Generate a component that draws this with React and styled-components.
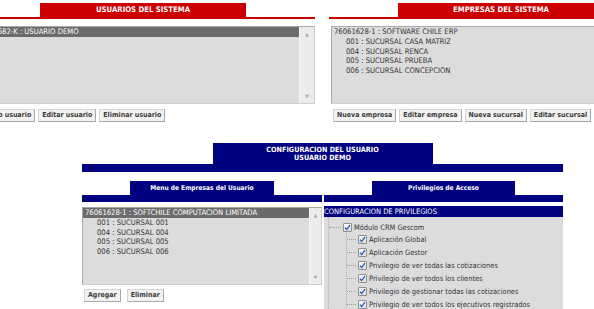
import React from "react";
import styled, { createGlobalStyle } from "styled-components";

const FONT = `"DejaVu Sans Condensed", "Liberation Sans", sans-serif`;

const GlobalStyle = createGlobalStyle`
  html, body { margin: 0; padding: 0; background: #fff; overflow: hidden; }
  body { font-family: ${FONT}; }
`;

const Page = styled.div`
  width: 703px;
  margin-left: -29px;
  padding-top: 3px;
`;

const TopRow = styled.div`
  display: flex;
  gap: 14px;
`;

const Panel = styled.section`
  width: 344px;
  flex: none;
`;

const RedTab = styled.div`
  width: 206px;
  height: 14px;
  margin: 0 auto;
  background: #cc0000;
  color: #fff;
  font-weight: bold;
  font-size: 7.7px;
  line-height: 14px;
  text-align: center;
`;

const RedRule = styled.div`
  height: 2px;
  background: #cc0000;
`;

const ListBox = styled.div`
  display: flex;
  box-sizing: border-box;
  height: 78px;
  margin: ${(p) => p.$m || "0"};
  background: #dcdcdc;
  border: 1px solid #a9a9a9;
  border-right-color: #cfcfcf;
  border-bottom-color: #cfcfcf;
`;

const ListItems = styled.div`
  flex: 1;
  min-width: 0;
  overflow: hidden;
`;

const Item = styled.div`
  height: 9.75px;
  line-height: 9.75px;
  font-size: 7.6px;
  white-space: nowrap;
  color: ${(p) => (p.$sel ? "#fff" : "#333")};
  background: ${(p) => (p.$sel ? "#6b6b6b" : "transparent")};
  padding-left: ${(p) => (p.$indent ? 14 : 2)}px;
`;

const ScrollBar = styled.div`
  width: ${(p) => p.$w || 14}px;
  flex: none;
  background: #ececec;
  border-left: 1px solid #f6f6f6;
  display: flex;
  flex-direction: column;
  justify-content: space-between;
  align-items: center;
  color: #a8a8a8;
  font-size: 5px;
  padding: 4px 0 4px;
  box-sizing: border-box;
`;

const ButtonRow = styled.div`
  display: flex;
  gap: ${(p) => p.$gap || 3}px;
  margin-top: ${(p) => p.$mt || 5}px;
  padding-left: ${(p) => p.$pl || 4}px;
`;

const Btn = styled.button`
  height: 13px;
  padding: 0 3px;
  margin: 0;
  font-family: ${FONT};
  font-size: 7px;
  font-weight: bold;
  color: #3a3a3a;
  background: #f2f2f2;
  border: 1px solid #d4d4d4;
  border-right-color: #a8a8a8;
  border-bottom-color: #a8a8a8;
  line-height: 11px;
  white-space: nowrap;
`;

const Config = styled.section`
  width: 481px;
  margin: 21px auto 0;
`;

const NavyTab = styled.div`
  width: ${(p) => p.$w}px;
  height: ${(p) => p.$h}px;
  margin: 0 auto;
  background: #000080;
  color: #fff;
  font-weight: bold;
  font-size: ${(p) => p.$fs || 7}px;
  text-align: center;
  display: flex;
  flex-direction: column;
  justify-content: center;
  line-height: 8px;
`;

const NavyBar = styled.div`
  height: ${(p) => p.$h || 7}px;
  background: #000080;
`;

const Columns = styled.div`
  display: grid;
  grid-template-columns: 240px 239px;
  column-gap: 2px;
`;

const Column = styled.div`
  padding-top: 9px;
`;

const PrivHeader = styled.div`
  margin-top: 4px;
  height: 11px;
  line-height: 11px;
  background: #000080;
  color: #fff;
  font-size: 7.5px;
`;

const TreeBox = styled.div`
  background: #dcdcdc;
  height: 120px;
  padding-top: 4px;
  position: relative;
`;

const TreeRow = styled.div`
  display: flex;
  align-items: center;
  height: ${(p) => (p.$root ? 12 : 13)}px;
  padding-left: ${(p) => (p.$root ? 5 : 23)}px;
  font-size: 7.4px;
  color: #333;
  white-space: nowrap;
`;

const Branch = styled.span`
  width: ${(p) => (p.$root ? 12 : 9)}px;
  border-top: 1px dotted #9a9a9a;
  margin-right: 2px;
  flex: none;
`;

const Guide = styled.div`
  position: absolute;
  left: ${(p) => p.$x}px;
  top: ${(p) => p.$top}px;
  bottom: 0;
  border-left: 1px dotted #b0b0b0;
`;

const Check = styled.span`
  width: 9px;
  height: 9px;
  flex: none;
  box-sizing: border-box;
  border: 1px solid #8f8f8f;
  border-radius: 1px;
  background: linear-gradient(#fafafa, #e0e0e0);
  display: inline-flex;
  align-items: center;
  justify-content: center;
  margin-right: 2px;
`;

const CheckMark = () => (
  <svg width="7" height="7" viewBox="0 0 7 7">
    <path d="M1 3.8 L2.7 5.6 L6 1" fill="none" stroke="#2b5fb8" strokeWidth="1.3" />
  </svg>
);

const Scroll = ({ w }) => (
  <ScrollBar $w={w}>
    <span>▲</span>
    <span>▼</span>
  </ScrollBar>
);

const privileges = [
  "Aplicación Global",
  "Aplicación Gestor",
  "Privilegio de ver todas las cotizaciones",
  "Privilegio de ver todos los clientes",
  "Privilegio de gestionar todas las cotizaciones",
  "Privilegio de ver todos los ejecutivos registrados",
];

export default function App() {
  return (
    <>
      <GlobalStyle />
      <Page>
        <TopRow>
          <Panel>
            <RedTab>USUARIOS DEL SISTEMA</RedTab>
            <RedRule />
            <ListBox $m="7px 0 0 2px">
              <ListItems>
                <Item $sel>12345682-K : USUARIO DEMO</Item>
              </ListItems>
              <Scroll w={15} />
            </ListBox>
            <ButtonRow $pl={5}>
              <Btn>Nuevo usuario</Btn>
              <Btn>Editar usuario</Btn>
              <Btn>Eliminar usuario</Btn>
            </ButtonRow>
          </Panel>
          <Panel>
            <RedTab>EMPRESAS DEL SISTEMA</RedTab>
            <RedRule />
            <ListBox $m="7px 0 0 2px">
              <ListItems>
                <Item>76061628-1 : SOFTWARE CHILE ERP</Item>
                <Item $indent>001 : SUCURSAL CASA MATRIZ</Item>
                <Item $indent>004 : SUCURSAL RENCA</Item>
                <Item $indent>005 : SUCURSAL PRUEBA</Item>
                <Item $indent>006 : SUCURSAL CONCEPCION</Item>
              </ListItems>
            </ListBox>
            <ButtonRow $pl={4}>
              <Btn>Nueva empresa</Btn>
              <Btn>Editar empresa</Btn>
              <Btn>Nueva sucursal</Btn>
              <Btn>Editar sucursal</Btn>
            </ButtonRow>
          </Panel>
        </TopRow>

        <Config>
          <NavyTab $w={220} $h={21} $fs={7.2}>
            <span>CONFIGURACION DEL USUARIO</span>
            <span>USUARIO DEMO</span>
          </NavyTab>
          <NavyBar $h={8} />
          <Columns>
            <Column>
              <NavyTab $w={144} $h={14} $fs={6.6}>Menu de Empresas del Usuario</NavyTab>
              <NavyBar />
              <ListBox $m="5px 0 0 0">
                <ListItems>
                  <Item $sel>76061628-1 : SOFTCHILE COMPUTACION LIMITADA</Item>
                  <Item $indent>001 : SUCURSAL 001</Item>
                  <Item $indent>004 : SUCURSAL 004</Item>
                  <Item $indent>005 : SUCURSAL 005</Item>
                  <Item $indent>006 : SUCURSAL 006</Item>
                </ListItems>
                <Scroll w={12} />
              </ListBox>
              <ButtonRow $mt={4} $pl={2} $gap={6}>
                <Btn>Agregar</Btn>
                <Btn>Eliminar</Btn>
              </ButtonRow>
            </Column>
            <Column>
              <NavyTab $w={143} $h={14} $fs={6.6}>Privilegios de Acceso</NavyTab>
              <NavyBar />
              <PrivHeader>CONFIGURACION DE PRIVILEGIOS</PrivHeader>
              <TreeBox>
                <Guide $x={4} $top={0} />
                <Guide $x={22} $top={16} />
                <TreeRow $root>
                  <Branch $root />
                  <Check><CheckMark /></Check>
                  Módulo CRM Gescom
                </TreeRow>
                {privileges.map((p) => (
                  <TreeRow key={p}>
                    <Branch />
                    <Check><CheckMark /></Check>
                    {p}
                  </TreeRow>
                ))}
              </TreeBox>
            </Column>
          </Columns>
        </Config>
      </Page>
    </>
  );
}
